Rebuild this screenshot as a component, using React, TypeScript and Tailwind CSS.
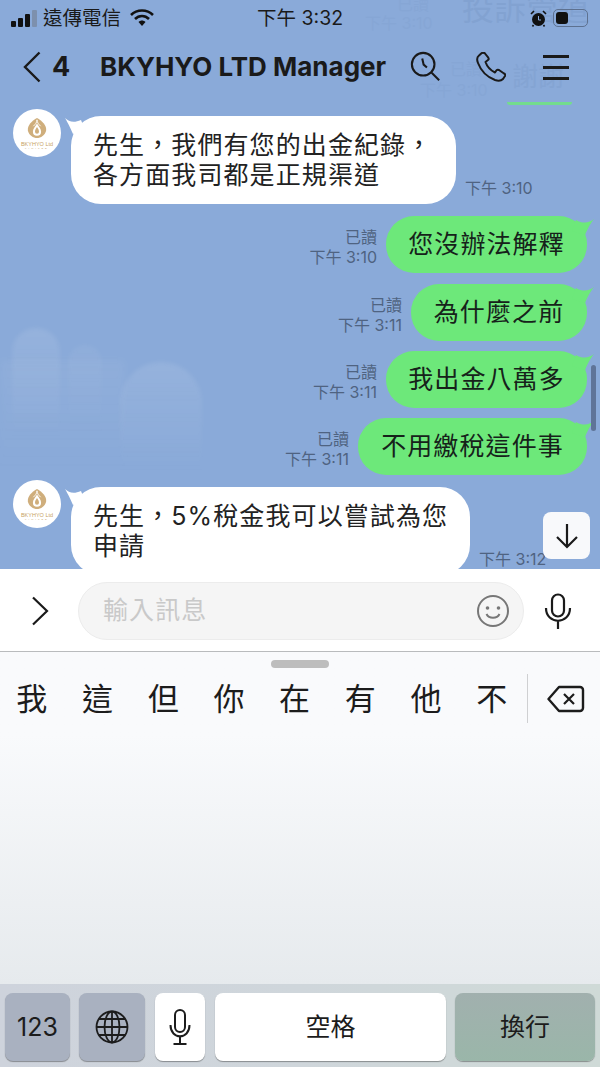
import React from 'react';

const CJK = "font-['Inter','Noto_Sans_CJK_TC',sans-serif]";

const Logo = () => (
  <div className="w-12 h-12 rounded-full bg-white flex flex-col items-center shrink-0 pt-[8px]">
    <svg width="20" height="22" viewBox="0 0 22 22">
      <path d="M11 0C16 3 22 8 21 14C20 19 15 22 11 22C7 22 2 19 1 14C0 8 6 3 11 0Z" fill="#cfae7c" />
      <path d="M11 2C11 5 9 7 7 9M11 2C11 5 13 7 15 9" stroke="#fff" strokeWidth="1" fill="none" />
      <path d="M11 6C13.5 10 15.5 12 15.5 15A4.5 4.5 0 0 1 6.5 15C6.5 12 8.5 10 11 6Z" fill="#fff" />
      <path d="M11 10C12.3 12 13.2 13.3 13.2 15A2.2 2.2 0 0 1 8.8 15C8.8 13.3 9.7 12 11 10Z" fill="#cfae7c" />
    </svg>
    <span className="text-[5.5px] leading-[6px] mt-[2px] text-[#c79f63] font-['Liberation_Sans',sans-serif] whitespace-nowrap">
      BKYHYO Ltd
    </span>
    <span className="text-[2.5px] leading-[3px] tracking-[2px] text-[#c79f63] font-['Liberation_Sans',sans-serif] whitespace-nowrap">
      LIMITED
    </span>
  </div>
);

const LeftTail = () => (
  <svg className="absolute left-[-6px] top-[2px]" width="22" height="18" viewBox="0 0 22 18">
    <path d="M0 0C4 4 9 5 16 2L20 12L8 16C5 9 3 5 0 0Z" fill="#fff" />
  </svg>
);

const RightTail = () => (
  <svg className="absolute right-[-7px] top-[1px]" width="24" height="20" viewBox="0 0 24 20">
    <path d="M24 2C19 6 13 7 6 3L2 14L15 18C18 11 20 7 24 2Z" fill="#6de87a" />
  </svg>
);

const Left = ({ lines, width, time, className }: { lines: string[]; width: string; time: string; className?: string }) => (
  <div className={`flex pl-[13px] ${className ?? ''}`}>
    <Logo />
    <div className="ml-[10px] mt-[7px] flex items-end">
      <div className={`relative bg-white rounded-[30px] pl-[22px] pt-[14px] pb-[14px] ${width}`}>
        <LeftTail />
        {lines.map((l) => (
          <div key={l} className="relative text-[25px] leading-[30px] tracking-[1.1px] text-[#222] whitespace-nowrap">
            {l}
          </div>
        ))}
      </div>
      <span className="ml-[9px] mb-[7px] text-[16px] leading-[18px] text-[#4f6381] whitespace-nowrap">{time}</span>
    </div>
  </div>
);

const Right = ({ text, time, width, className }: { text: string; time: string; width: string; className?: string }) => (
  <div className={`flex justify-end items-end pr-[13px] ${className ?? ''}`}>
    <div className="flex flex-col items-end text-[16px] leading-[20px] text-[#4f6381] mr-[9px] mb-[6px]">
      <span>已讀</span>
      <span className="whitespace-nowrap">{time}</span>
    </div>
    <div className={`relative h-[57px] bg-[#6de87a] rounded-[28px] flex items-center justify-center ${width}`}>
      <RightTail />
      <span className="relative text-[25px] tracking-[1.1px] text-[#16221a] whitespace-nowrap">{text}</span>
    </div>
  </div>
);

const Candidate = ({ c }: { c: string }) => (
  <span className="w-[65.7px] text-center text-[31px] leading-[36px] text-[#1c1c1c] shrink-0">{c}</span>
);

const Key = ({ className, children }: { className: string; children: React.ReactNode }) => (
  <div className={`h-[68px] rounded-[8px] flex items-center justify-center shadow-[0_1px_1px_rgba(0,0,0,0.35)] text-[#1c1c1c] ${className}`}>
    {children}
  </div>
);

const App: React.FC = () => {
  return (
    <div className={`w-[600px] h-[1067px] overflow-hidden flex flex-col bg-white ${CJK}`}>
      <section className="relative h-[569px] shrink-0 overflow-hidden bg-[#8aaad9]">
        {/* faint clouds in the wallpaper */}
        <div className="absolute left-[12px] top-[328px] w-[48px] h-[110px] rounded-t-full bg-gradient-to-b from-white/10 to-transparent blur-[2px]" />
        <div className="absolute left-[68px] top-[345px] w-[34px] h-[90px] rounded-t-full bg-gradient-to-b from-white/5 to-transparent blur-[2px]" />
        <div className="absolute left-[120px] top-[362px] w-[82px] h-[110px] rounded-t-full bg-gradient-to-b from-white/10 to-transparent blur-[2px]" />
        <div className="absolute left-0 top-[360px] w-[125px] h-[110px] bg-gradient-to-b from-white/5 to-transparent blur-[4px]" />

        {/* message list showing through the bar */}
        <div className="absolute left-[462px] top-[-11px] text-[32px] leading-[40px] text-[#82a2d1] whitespace-nowrap">投訴管道</div>
        <div className="absolute left-[512px] top-[60px] text-[26px] leading-[34px] text-[#84a4d3] whitespace-nowrap">謝謝</div>
        <div className="absolute left-[450px] top-[59px] text-[16px] leading-[20px] text-[#86a6d5] whitespace-nowrap">已讀</div>
        <div className="absolute left-[420px] top-[80px] text-[16px] leading-[20px] text-[#86a6d5] whitespace-nowrap">下午 3:10</div>
        <div className="absolute left-[397px] top-[-6px] text-[16px] leading-[20px] text-[#86a6d5] whitespace-nowrap">已讀</div>
        <div className="absolute left-[365px] top-[13px] text-[16px] leading-[20px] text-[#86a6d5] whitespace-nowrap">下午 3:10</div>
        <div className="absolute left-[507px] top-[102px] w-[65px] h-[3px] rounded-b-full bg-[#6de87a]/80" />

        <header className="relative h-[36px] flex items-center text-[19.5px] text-[#1a1a1a]">
          <div className="flex items-end gap-[2px] ml-[11px] h-[17px]">
            <span className="w-[5px] h-[6px] rounded-[1px] bg-[#111]" />
            <span className="w-[5px] h-[9px] rounded-[1px] bg-[#111]" />
            <span className="w-[5px] h-[13px] rounded-[1px] bg-[#111]" />
            <span className="w-[5px] h-[17px] rounded-[1px] bg-[#7d90ad]" />
          </div>
          <span className="ml-[6px] leading-[24px]">遠傳電信</span>
          <svg className="ml-[9px]" width="24" height="18" viewBox="0 0 24 18">
            <path d="M1 6C7 0 17 0 23 6" stroke="#111" strokeWidth="2.6" fill="none" />
            <path d="M5 10C9 6 15 6 19 10" stroke="#111" strokeWidth="2.6" fill="none" />
            <path d="M8.5 13C10.5 11 13.5 11 15.5 13L12 17Z" fill="#111" />
          </svg>
          <span className="ml-[103px] leading-[24px] whitespace-nowrap">下午 3:32</span>
          <svg className="ml-[187px]" width="17" height="17" viewBox="0 0 17 17">
            <circle cx="8.5" cy="9.5" r="6.5" fill="#111" />
            <path d="M8.5 6V10H11" stroke="#8aaad9" strokeWidth="1" fill="none" />
            <path d="M1 4L4 1M16 4L13 1M3.5 15L2.5 16.5M13.5 15L14.5 16.5" stroke="#111" strokeWidth="1.6" />
          </svg>
          <div className="ml-[6px] w-[35px] h-[18px] rounded-[5px] border border-[#5d7190] p-[2px]">
            <div className="w-[12px] h-full rounded-[3px] bg-[#111]" />
          </div>
        </header>

        <nav className="relative h-[62px] flex items-center text-[#1a1a1a]">
          <svg className="ml-[23px]" width="18" height="32" viewBox="0 0 18 32">
            <path d="M16.5 1.5L2 16L16.5 30.5" stroke="#1a1a1a" strokeWidth="2.4" fill="none" />
          </svg>
          <span className="ml-[11px] w-[48px] text-[27px] leading-[32px] font-bold">4</span>
          <h1 className="text-[26px] leading-[32px] font-bold whitespace-nowrap w-[310px]">BKYHYO LTD Manager</h1>
          <svg width="32" height="32" viewBox="0 0 34 34">
            <circle cx="14" cy="14" r="12" stroke="#1a1a1a" strokeWidth="2.2" fill="none" />
            <path d="M13 8L14.5 14.5L18 17.5" stroke="#1a1a1a" strokeWidth="2.2" fill="none" />
            <path d="M23 23L31 31" stroke="#1a1a1a" strokeWidth="2.2" />
          </svg>
          <svg className="ml-[34px]" width="30" height="30" viewBox="0 0 30 30">
            <path
              d="M3 3.5C1 5 0.8 8 2 11C5 19 11 25 19 28C22 29 25 29 27 27L29 24C29.5 23 29 22 28 21.5L23 18C22 17.5 21 17.7 20.5 18.3L19 20.5C14 18 11 14.5 9.5 10L12 8C12.7 7.5 12.8 6.5 12.3 5.7L9 1.5C8 0.5 6.5 0.5 5.5 1.2Z"
              stroke="#1a1a1a"
              strokeWidth="2"
              fill="none"
              strokeLinejoin="round"
            />
          </svg>
          <div className="ml-[37px] w-[26px] flex flex-col gap-[8px]">
            <span className="h-[3px] bg-[#1a1a1a]" />
            <span className="h-[3px] bg-[#1a1a1a]" />
            <span className="h-[3px] bg-[#1a1a1a]" />
          </div>
        </nav>

        <main className="relative pt-[11px]">
          <Left lines={['先生，我們有您的出金紀錄，', '各方面我司都是正規渠道']} width="w-[385px]" time="下午 3:10" />
          <Right className="mt-[12px]" text="您沒辦法解釋" time="下午 3:10" width="w-[201px]" />
          <Right className="mt-[11px]" text="為什麼之前" time="下午 3:11" width="w-[176px]" />
          <Right className="mt-[10px]" text="我出金八萬多" time="下午 3:11" width="w-[201px]" />
          <Right className="mt-[10px]" text="不用繳稅這件事" time="下午 3:11" width="w-[229px]" />
          <Left className="mt-[5px]" lines={['先生，5%稅金我可以嘗試為您', '申請']} width="w-[399px]" time="下午 3:12" />
        </main>

        <div className="absolute left-[591px] top-[365px] w-[5px] h-[66px] rounded-full bg-[#5f7498]" />
        <div className="absolute left-[543px] top-[512px] w-[47px] h-[47px] rounded-[8px] bg-[#f8f9fb] flex items-center justify-center">
          <svg width="24" height="26" viewBox="0 0 24 26">
            <path d="M12 1V24M2 14L12 24L22 14" stroke="#1a1a1a" strokeWidth="2.2" fill="none" />
          </svg>
        </div>
      </section>

      <section className="h-[83px] shrink-0 flex items-center bg-white border-b border-[#b9bbbd] pt-[2px]">
        <svg className="ml-[31px]" width="18" height="30" viewBox="0 0 18 30">
          <path d="M2 1.5L16 15L2 28.5" stroke="#1a1a1a" strokeWidth="2.2" fill="none" />
        </svg>
        <div className="ml-[29px] w-[446px] h-[58px] rounded-full bg-[#f5f5f5] border border-[#ececec] flex items-center pl-[24px] pr-[13px]">
          <span className="flex-1 text-[25px] tracking-[1.1px] text-[#c9c9c9]">輸入訊息</span>
          <svg width="34" height="34" viewBox="0 0 34 34">
            <circle cx="17" cy="17" r="15" stroke="#777" strokeWidth="2" fill="none" />
            <circle cx="11.5" cy="14" r="1.8" fill="#777" />
            <circle cx="22.5" cy="14" r="1.8" fill="#777" />
            <path d="M10.5 20C13 25 21 25 23.5 20" stroke="#777" strokeWidth="2" fill="none" />
          </svg>
        </div>
        <svg className="ml-[20px]" width="28" height="36" viewBox="0 0 28 36">
          <rect x="8" y="1.5" width="12" height="22" rx="6" stroke="#1a1a1a" strokeWidth="2.2" fill="none" />
          <path d="M2 15C2 32 26 32 26 15M14 28V36" stroke="#1a1a1a" strokeWidth="2.2" fill="none" />
        </svg>
      </section>

      <section className="flex-1 flex flex-col">
        <div className="flex-1 flex flex-col bg-gradient-to-b from-[#f9fafc] from-25% to-[#e6eaed]">
          <div className="self-center mt-[8px] w-[58px] h-[8px] rounded-full bg-[#bdbdbd]" />
          <div className="flex items-center mt-[6px] h-[49px] -ml-px">
            <Candidate c="我" />
            <Candidate c="這" />
            <Candidate c="但" />
            <Candidate c="你" />
            <Candidate c="在" />
            <Candidate c="有" />
            <Candidate c="他" />
            <Candidate c="不" />
            <div className="ml-[2px] w-px h-[49px] bg-[#cfd0d2]" />
            <svg className="ml-[19px]" width="38" height="28" viewBox="0 0 38 28">
              <path d="M12 2H33A3 3 0 0 1 36 5V23A3 3 0 0 1 33 26H12L1.5 14Z" stroke="#1c1c1c" strokeWidth="2.4" strokeLinejoin="round" fill="none" />
              <path d="M17 9L27 19M27 9L17 19" stroke="#1c1c1c" strokeWidth="2.2" />
            </svg>
          </div>
        </div>
        <div className="h-[83px] shrink-0 flex pl-[5px] pt-[9px] bg-gradient-to-r from-[#ced3dc] via-[#cfd6db] to-[#cfdad7]">
          <Key className="w-[65px] bg-[#a9b1c0] text-[25px] pt-[2px]">123</Key>
          <Key className="ml-[9px] w-[66px] bg-[#a9b1c0]">
            <svg width="34" height="34" viewBox="0 0 34 34" fill="none" stroke="#1c1c1c" strokeWidth="1.8">
              <circle cx="17" cy="17" r="15.5" />
              <ellipse cx="17" cy="17" rx="7.5" ry="15.5" />
              <path d="M17 1.5V32.5M1.5 17H32.5M4 9H30M4 25H30" />
            </svg>
          </Key>
          <Key className="ml-[10px] w-[50px] bg-white">
            <svg width="22" height="36" viewBox="0 0 22 36" fill="none" stroke="#1c1c1c" strokeWidth="2">
              <rect x="6" y="1" width="10" height="22" rx="5" />
              <path d="M1.5 16C1.5 31 20.5 31 20.5 16M11 27V34M4.5 35H17.5" />
            </svg>
          </Key>
          <Key className="ml-[10px] w-[231px] bg-white text-[25px] pt-[2px]">空格</Key>
          <Key className="ml-[9px] w-[140px] bg-gradient-to-b from-[#a1b0ae] to-[#9ab6a9] text-[25px] pt-[2px]">換行</Key>
        </div>
      </section>
    </div>
  );
};

export default App;
